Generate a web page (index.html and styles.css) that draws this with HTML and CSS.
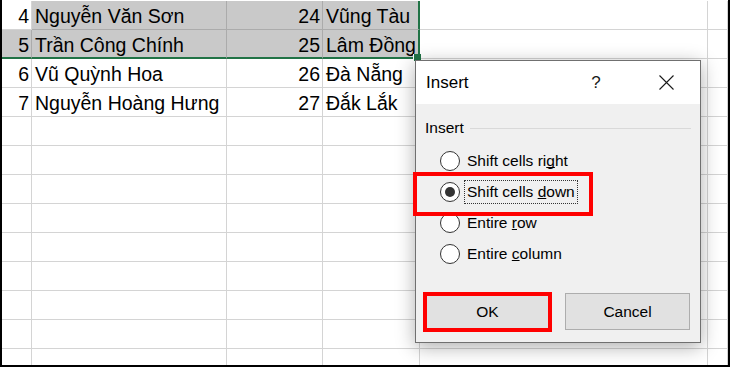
FILE: index.html
```html
<!DOCTYPE html>
<html lang="vi">

<head>
    <meta charset="UTF-8">
    <title>Insert cells</title>
    <link rel="stylesheet" href="styles.css">
</head>

<body>
    <div class="frame">
        <!-- worksheet -->
        <div class="sheet">
            <div class="cell num">4</div>
            <div class="cell sel">Nguyễn Văn Sơn</div>
            <div class="cell sel num">24</div>
            <div class="cell sel sel-right">Vũng Tàu</div>
            <div class="cell"></div>
            <div class="cell"></div>

            <div class="cell sel sel-bottom num">5</div>
            <div class="cell sel sel-bottom">Trần Công Chính</div>
            <div class="cell sel sel-bottom num">25</div>
            <div class="cell sel sel-bottom sel-right">Lâm Đồng</div>
            <div class="cell"></div>
            <div class="cell"></div>

            <div class="cell num">6</div>
            <div class="cell">Vũ Quỳnh Hoa</div>
            <div class="cell num">26</div>
            <div class="cell">Đà Nẵng</div>
            <div class="cell"></div>
            <div class="cell"></div>

            <div class="cell num">7</div>
            <div class="cell">Nguyễn Hoàng Hưng</div>
            <div class="cell num">27</div>
            <div class="cell">Đắk Lắk</div>
            <div class="cell"></div>
            <div class="cell"></div>

            <div class="cell"></div><div class="cell"></div><div class="cell"></div><div class="cell"></div><div class="cell"></div><div class="cell"></div>
            <div class="cell"></div><div class="cell"></div><div class="cell"></div><div class="cell"></div><div class="cell"></div><div class="cell"></div>
            <div class="cell"></div><div class="cell"></div><div class="cell"></div><div class="cell"></div><div class="cell"></div><div class="cell"></div>
            <div class="cell"></div><div class="cell"></div><div class="cell"></div><div class="cell"></div><div class="cell"></div><div class="cell"></div>
            <div class="cell"></div><div class="cell"></div><div class="cell"></div><div class="cell"></div><div class="cell"></div><div class="cell"></div>
            <div class="cell"></div><div class="cell"></div><div class="cell"></div><div class="cell"></div><div class="cell"></div><div class="cell"></div>
            <div class="cell"></div><div class="cell"></div><div class="cell"></div><div class="cell"></div><div class="cell"></div><div class="cell"></div>
            <div class="cell"></div><div class="cell"></div><div class="cell"></div><div class="cell"></div><div class="cell"></div><div class="cell"></div>
            <div class="cell"></div><div class="cell"></div><div class="cell"></div><div class="cell"></div><div class="cell"></div><div class="cell"></div>
        </div>
        <div class="fill-handle"></div>

        <!-- Insert dialog -->
        <div class="dialog">
            <div class="dialog-title">
                <span class="title-text">Insert</span>
                <span class="title-btn help">?</span>
                <span class="title-btn close">
                    <svg width="15" height="15" viewBox="0 0 15 15">
                        <path d="M0.5 0.5 L14.5 14.5 M14.5 0.5 L0.5 14.5" stroke="#1a1a1a" stroke-width="1.1" fill="none" />
                    </svg>
                </span>
            </div>
            <div class="dialog-body">
                <div class="group-head">
                    <span>Insert</span>
                    <div class="group-line"></div>
                </div>
                <div class="radio-list">
                    <div class="radio-row">
                        <span class="radio"></span>
                        <span class="radio-label">Shift cells ri<u>g</u>ht</span>
                    </div>
                    <div class="radio-row">
                        <span class="radio checked"></span>
                        <span class="radio-label focused">Shift cells <u>d</u>own</span>
                    </div>
                    <div class="radio-row">
                        <span class="radio"></span>
                        <span class="radio-label">Entire <u>r</u>ow</span>
                    </div>
                    <div class="radio-row">
                        <span class="radio"></span>
                        <span class="radio-label">Entire <u>c</u>olumn</span>
                    </div>
                </div>
                <div class="button-row">
                    <button class="btn">OK</button>
                    <button class="btn">Cancel</button>
                </div>
            </div>
            <!-- red highlight boxes -->
            <div class="mark mark-down"></div>
            <div class="mark mark-ok"></div>
        </div>
    </div>
</body>

</html>
```

FILE: styles.css
```css
body {
    margin: 0;
    background: #fff;
}

.frame {
    position: relative;
    width: 730px;
    height: 367px;
    box-sizing: border-box;
    border-left: 2px solid #000;
    border-right: 2px solid #000;
    border-bottom: 2px solid #000;
    overflow: hidden;
    font-family: "Liberation Sans", Arial, sans-serif;
}

/* worksheet grid */
.sheet {
    display: grid;
    grid-template-columns: 30px 195px 96px 97px 288px 20px;
    grid-auto-rows: 29px;
    padding-top: 1px;
}

.cell {
    box-sizing: border-box;
    border-right: 1px solid #d4d4d4;
    border-bottom: 1px solid #d4d4d4;
    font-size: 19.5px;
    line-height: 26px;
    padding: 2px 0 0 3px;
    white-space: nowrap;
    color: #000;
}

.num {
    text-align: right;
    padding-left: 0;
    padding-right: 2px;
}

.sel {
    background: #c9c9c9;
    border-color: #ababab;
}

.sel-right {
    border-right: 2px solid #217346;
}

.sel-bottom {
    border-bottom: 2px solid #217346;
}

.fill-handle {
    position: absolute;
    left: 411px;
    top: 54px;
    width: 7px;
    height: 7px;
    background: #217346;
    border-left: 1px solid #fff;
    border-bottom: 1px solid #fff;
}

/* dialog */
.dialog {
    position: absolute;
    left: 413px;
    top: 60px;
    width: 286px;
    height: 283px;
    box-sizing: border-box;
    border: 1px solid #707070;
    background: #f0f0f0;
    box-shadow: 0 4px 18px rgba(0, 0, 0, 0.32);
    font-family: "Liberation Sans", Arial, sans-serif;
    color: #000;
    display: flex;
    flex-direction: column;
}

.dialog-title {
    height: 43px;
    background: #fff;
    display: flex;
    align-items: center;
    padding-left: 10px;
    padding-right: 11px;
}

.title-text {
    flex: 1;
    font-size: 17px;
}

.title-btn {
    width: 46px;
    display: flex;
    justify-content: center;
    align-items: center;
}

.help {
    font-size: 17px;
    margin-right: 24px;
    color: #1a1a1a;
}

.dialog-body {
    flex: 1;
    padding: 14px 9px 0 9px;
    font-size: 15.5px;
}

.group-head {
    display: flex;
    align-items: center;
    height: 20px;
}

.group-line {
    flex: 1;
    height: 1px;
    background: #d9d9d9;
    margin-left: 6px;
}

.radio-list {
    margin-top: 7px;
    padding-left: 15px;
}

.radio-row {
    height: 31px;
    display: flex;
    align-items: center;
}

.radio {
    width: 20px;
    height: 20px;
    box-sizing: border-box;
    border: 1px solid #333;
    border-radius: 50%;
    background: #fff;
    position: relative;
}

.radio.checked::after {
    content: "";
    position: absolute;
    left: 4px;
    top: 4px;
    width: 10px;
    height: 10px;
    border-radius: 50%;
    background: #333;
}

.radio-label {
    margin-left: 4px;
    padding: 0 2px;
    line-height: 22px;
    border: 1px solid transparent;
}

.radio-label u {
    text-decoration-skip-ink: none;
}

.radio-label.focused {
    border: 1px dotted #333;
}

.button-row {
    margin-top: 24px;
    display: flex;
    gap: 15px;
}

.btn {
    width: 125px;
    height: 37px;
    background: #e1e1e1;
    border: 1px solid #adadad;
    font-family: "Liberation Sans", Arial, sans-serif;
    font-size: 15.5px;
    color: #000;
    padding: 0;
}

/* annotation boxes */
.mark {
    position: absolute;
    border: 4px solid #ff0000;
    box-sizing: border-box;
}

.mark-down {
    left: -3px;
    top: 111px;
    width: 180px;
    height: 44px;
}

.mark-ok {
    left: 7px;
    top: 231px;
    width: 129px;
    height: 40px;
}
```
